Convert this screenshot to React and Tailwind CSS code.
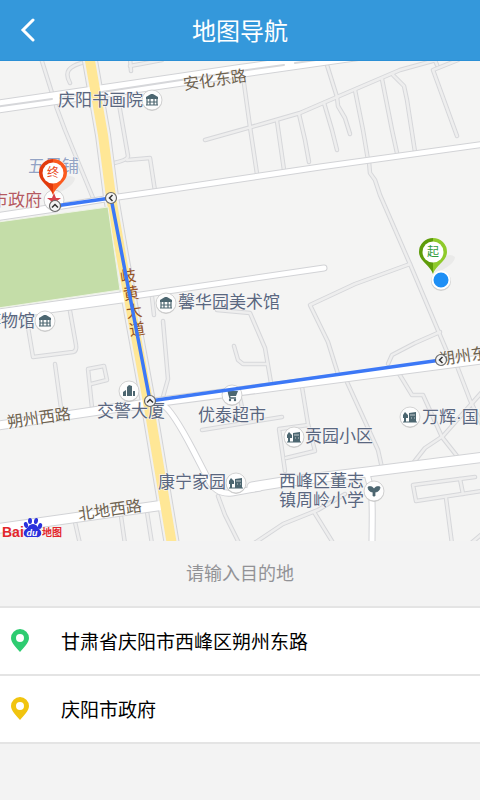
import React, { useState } from "react";

const minorRoads = [
	"M41 58 52 93",
	"M56 106 65 130 93 198",
	"M70 83C64 72 68 66 85 62",
	"M130 58 131 71",
	"M130 66 162 60",
	"M119 104 128 156Q128 160 114 163",
	"M127 160 150 158 155 191",
	"M243 76 250 127 257 174",
	"M205 140 262 124 300 113 337 97 400 70 436 60",
	"M327 65 337 97 338 106 345 118 350 134",
	"M277 121 284 170",
	"M299 114 305 140 309 162",
	"M324 103 332 130 337 150",
	"M355 90 363 130 368 160",
	"M382 79 392 130 397 153",
	"M393 75 404 86 407 100 415 152",
	"M434 58 437 65M458 60 433 70 457 136",
	"M369 162 370 173 375 180 380 195 410 264 448 354",
	"M410 264 355 284 310 305 328 342 338 374",
	"M347 382 378 450 382 468",
	"M440 332 415 343 392 355 388 364",
	"M457 366 470 400 482 425",
	"M482 392 443 436 425 448 414 462",
	"M398 372 412 395 423 395 442 437 457 456",
	"M475 477 413 485 416 501 482 491",
	"M460 479 463 494",
	"M446 498 452 544",
	"M482 534 470 544",
	"M250 546 283 524 318 510 345 494",
	"M314 512 335 546",
	"M218 496 225 515 240 545",
	"M163 321 168 379 163 397",
	"M234 346 238 360 243 364 267 364",
	"M217 310 250 313 265 348 271 383",
	"M302 387 308 424 315 451 286 458",
	"M308 425 279 429 285 471",
	"M240 398 243 412",
	"M202 430 282 417",
	"M27 321 33 357 73 352Q77 351 76 345L70 311",
	"M55 364 61 408",
	"M92 408 88 369 104 366 107 380 91 384",
	"M152 297 154 315",
	"M75 522 80 544",
	"M121 516 125 544",
	"M147 512 152 544",
];

const whiteRoads = [
	{ d: "M-5 107 240 71 400 48", width: 12 },
	{ d: "M-5 217 55 208", width: 7 },
	{ d: "M50 208 111 198 160 191 320 167 485 144", width: 5 },
	{ d: "M-5 315 125 297", width: 10 },
	{ d: "M120 298 324 268", width: 5 },
	{ d: "M-5 426 150 403 310 382 485 359", width: 8 },
	{ d: "M163 405 Q172 410 193 450L208 479Q216 495 232 493L260 488", width: 5 },
	{ d: "M252 487 283 482 367 472 485 457", width: 9 },
	{ d: "M-5 529 164 505", width: 9 },
	{ d: "M367 474C374 495 372 510 372 545", width: 5 },
];

const highway = "M89 55 103 135 111 197 121 255 139 353 150 413 172 545";

const labels = [
	{ x: 58, y: 106, text: "庆阳书画院" },
	{ x: 178, y: 308, text: "馨华园美术馆" },
	{ x: 97, y: 417, text: "交警大厦" },
	{ x: 198, y: 421, text: "优泰超市" },
	{ x: 305, y: 442, text: "贡园小区" },
	{ x: 158, y: 488, text: "康宁家园" },
	{ x: 279, y: 487, text: "西峰区董志" },
	{ x: 279, y: 506, text: "镇周岭小学" },
];

const places = [
	{ x: 152, y: 100, type: "museum" },
	{ x: 45, y: 321, type: "museum" },
	{ x: 166, y: 303, type: "museum" },
	{ x: 129, y: 391, type: "building" },
	{ x: 232, y: 395, type: "shop" },
	{ x: 294, y: 437, type: "estate" },
	{ x: 236, y: 483, type: "estate" },
	{ x: 410, y: 417, type: "estate" },
	{ x: 374, y: 491, type: "school" },
	{ x: 54, y: 200, type: "office" },
];

const icons = {
	museum: (
		<g>
			<path d="M-1-6H1L6-3V-1H-6V-3Z" />
			<path d="M-5-1V5M-2-1V5M2-1V5M5-1V5M-6 5H6M-5 2H5" stroke="#4c6670" strokeWidth="1.2" />
		</g>
	),
	building: <path d="M-6 1-3-1V5H-6ZM-2-4 0-6 3-5V5H-2ZM4 0H6V5H4Z" />,
	shop: (
		<g>
			<path d="M-7-5H-4L-2 3H4" fill="none" stroke="#4c6670" strokeWidth="1.5" />
			<path d="M-4-4H6L4 1H-3Z" />
			<circle cx="-2" cy="5" r="1.2" />
			<circle cx="3" cy="5" r="1.2" />
		</g>
	),
	estate: (
		<g>
			<path d="M-7-2-5-5-2-2V1H-4V5H-6V1H-7ZM-1-4 6-5V5H-1Z" />
			<path d="M-7 5H7" stroke="#4c6670" />
			<path d="M0-2H5M1 1H2M4 1H5" stroke="#dfe5e7" strokeWidth="0.8" />
		</g>
	),
	school: (
		<path d="M-1 5V1C-4 1-6-1-6-4-3-5-1-4 0-2 1-4 3-5 6-4 6-1 4 1 1 1V5Z" stroke="#4c6670" strokeWidth="0.8" />
	),
	office: (
		<path d="M0-7 2-2H7L3 1 5 6 0 3-5 6-3 1-7-2H-2Z" fill="#d6404a" />
	),
};

const Place = ({ x, y, type }) => (
	<g transform={`translate(${x} ${y})`}>
		<circle cy="1" r="10" fill="#bdbdbd" opacity="0.7" />
		<circle r="10" fill="#fdfdfd" stroke="#c9c9c9" strokeWidth="0.8" />
		<g fill="#4c6670">{icons[type]}</g>
	</g>
);

const RouteNode = ({ x, y, angle }) => (
	<g transform={`translate(${x} ${y}) rotate(${angle})`}>
		<circle r="5.5" fill="#f4f4f4" stroke="#696969" strokeWidth="1.2" />
		<path d="M-3 1.5 0-1.5 3 1.5" fill="none" stroke="#333" strokeWidth="1.5" />
	</g>
);

const Marker = ({ x, y, left, right, color, text }) => (
	<g transform={`translate(${x} ${y})`}>
		<path d="M1 22 8 7Q17 0 22 5 22 13 1 22Z" fill="#000" opacity="0.04" />
		<path d="M0 22C-3 13-14 9-14 0A14 14 0 0 1 0-14Z" fill={left} />
		<path d="M0 22C3 13 14 9 14 0A14 14 0 0 0 0-14Z" fill={right} />
		<circle r="10.5" fill="#fff" />
		<text y="4" fontSize="12" textAnchor="middle" fill={color}>
			{text}
		</text>
	</g>
);

const BaiduLogo = () => (
	<g>
		<text
			x="2"
			y="537"
			fontSize="14"
			fontWeight="bold"
			fill="#e3262b"
			className="font-['Liberation_Sans']"
		>
			Bai
		</text>
		<g fill="#2b32dc">
			<path d="M33 524C37 524 38 528 40 530 43 534 40 538 36 537H29C25 538 22 534 25 530 28 528 29 524 33 524Z" />
			<ellipse cx="26" cy="525" rx="2" ry="3" transform="rotate(-15 26 525)" />
			<ellipse cx="30" cy="521" rx="2" ry="3" />
			<ellipse cx="36" cy="521" rx="2" ry="3" transform="rotate(10 36 521)" />
			<ellipse cx="40" cy="526" rx="2" ry="3" transform="rotate(20 40 526)" />
		</g>
		<text
			x="32"
			y="536"
			fontSize="9"
			fontWeight="bold"
			fontStyle="italic"
			textAnchor="middle"
			fill="#fff"
			className="font-['Liberation_Sans']"
		>
			du
		</text>
		<text x="42" y="536" fontSize="10" fontWeight="bold" fill="#e3262b">
			地图
		</text>
	</g>
);

const RouteMap = () => (
	<svg viewBox="0 61 480 480" className="block w-full" role="img" aria-label="地图">
		<rect y="61" width="480" height="480" fill="#f4f4f3" />

		<g fill="none" strokeLinecap="round" strokeLinejoin="round">
			{minorRoads.map((d) => (
				<path key={d} d={d} stroke="#d6d7da" strokeWidth="4.5" />
			))}
			{minorRoads.map((d) => (
				<path key={d} d={d} stroke="#eeeeee" strokeWidth="2.5" />
			))}
			<path d={highway} stroke="#d2d3d6" strokeWidth="16" />
			{whiteRoads.map((road) => (
				<path key={road.d} d={road.d} stroke="#d2d3d6" strokeWidth={road.width + 2} />
			))}
			<path d={highway} stroke="#f1f1f1" strokeWidth="14" />
			{whiteRoads.map((road) => (
				<path key={road.d} d={road.d} stroke="#fff" strokeWidth={road.width} />
			))}
			<path
				d="M-5 107 52 99M60 98 82 94M102 92 240 71 284 65M295 63 400 48"
				stroke="#d6d7da"
				strokeWidth="2"
			/>
			<path d={highway} stroke="#ffe796" strokeWidth="10" />
		</g>
		<path d="M-2 222 108 207 120 290-2 308Z" fill="#c4dda8" stroke="#eef3e6" />

		{places.map((place) => (
			<Place key={`${place.x}-${place.y}`} {...place} />
		))}

		<g fontSize="17" stroke="#f8f8f8" strokeWidth="1" paintOrder="stroke">
			<g fill="#5a6780">
				{labels.map((label) => (
					<text key={label.text} x={label.x} y={label.y}>
						{label.text}
					</text>
				))}
				<text x="422" y="423">
					万辉<tspan className="font-['Liberation_Sans']">·</tspan>国际
				</text>
				<text x="35" y="327" textAnchor="end">
					博物馆
				</text>
			</g>
			<text x="28" y="172" fill="#93a3c4">
				五里铺
			</text>
			<text x="42" y="206" textAnchor="end" fill="#b55a62">
				庆阳市政府
			</text>
			<g fill="#6f6350" fontSize="16">
				<text transform="translate(184 90) rotate(-8)">安化东路</text>
				<text transform="translate(8 428) rotate(-8)">朔州西路</text>
				<text transform="translate(79 520) rotate(-8)">北地西路</text>
				<text transform="translate(440 365) rotate(-8)">朔州东路</text>
			</g>
			<g fill="#96521f" textAnchor="middle" strokeWidth="0" fontSize="16">
				<text transform="translate(129 282) rotate(-8)">岐</text>
				<text transform="translate(132 299) rotate(-8)">黄</text>
				<text transform="translate(135 317) rotate(-8)">大</text>
				<text transform="translate(138 335) rotate(-8)">道</text>
			</g>
		</g>

		<path
			d="M55 206 111 198 122 255 150 401 441 360"
			fill="none"
			stroke="#3c78f6"
			strokeWidth="3.5"
			strokeLinejoin="round"
		/>

		<RouteNode x={111} y={198} angle={-90} />
		<RouteNode x={150} y={401} angle={0} />
		<RouteNode x={441} y={360} angle={-90} />
		<Marker x={53} y={173} left="#e23a0c" right="#fb5a1e" color="#e8481c" text="终" />
		<RouteNode x={55} y={206} angle={0} />
		<Marker x={433} y={252} left="#5f9c0a" right="#8fca2b" color="#2f9c3c" text="起" />
		<circle cx="441" cy="281" r="10" fill="#000" opacity="0.15" />
		<circle cx="441" cy="280" r="8.5" fill="#1e8ff5" stroke="#fff" strokeWidth="2" />
		<BaiduLogo />
	</svg>
);

const PinIcon = ({ className }) => (
	<svg viewBox="0 0 18 24" className={`h-6 w-[18px] ${className}`} fill="currentColor">
		<path
			fillRule="evenodd"
			d="M9 0A9 9 0 0 1 18 9C18 14 13 18 9 23 5 18 0 14 0 9A9 9 0 0 1 9 0ZM9 5A4 4 0 0 0 9 13 4 4 0 0 0 9 5Z"
		/>
	</svg>
);

const stops = [
	{ name: "甘肃省庆阳市西峰区朔州东路", color: "text-[#2ecc71]" },
	{ name: "庆阳市政府", color: "text-[#f1c40f]" },
];

const App = () => {
	const [destination, setDestination] = useState("");

	return (
		<main className="min-h-screen bg-[#f3f3f3] font-['Noto_Sans_CJK_SC',sans-serif]">
			<header className="grid h-[61px] grid-cols-[60px_1fr_60px] items-center border-b border-[#2b8fd5] bg-[#3498db] text-white">
				<button className="flex h-full items-center pl-5" aria-label="返回">
					<svg viewBox="0 0 16 24" className="h-6 w-4" fill="none">
						<path
							d="M13 2 3 12 13 22"
							stroke="currentColor"
							strokeWidth="3"
							strokeLinecap="round"
						/>
					</svg>
				</button>
				<h1 className="text-center text-2xl">地图导航</h1>
			</header>

			<RouteMap />

			<input
				className="block h-[65px] w-full bg-transparent pb-1 text-center text-lg text-black outline-none placeholder:text-[#929296]"
				placeholder="请输入目的地"
				aria-label="目的地"
				value={destination}
				onChange={(e) => setDestination(e.target.value)}
			/>

			<ul className="border-t-2 border-[#e4e4e4] bg-white">
				{stops.map((stop) => (
					<li
						key={stop.name}
						className="flex h-[68px] items-center gap-8 border-b-2 border-[#e4e4e4] pl-[11px] text-[19px] text-black"
					>
						<PinIcon className={stop.color} />
						<span>{stop.name}</span>
					</li>
				))}
			</ul>
		</main>
	);
};

export default App;
